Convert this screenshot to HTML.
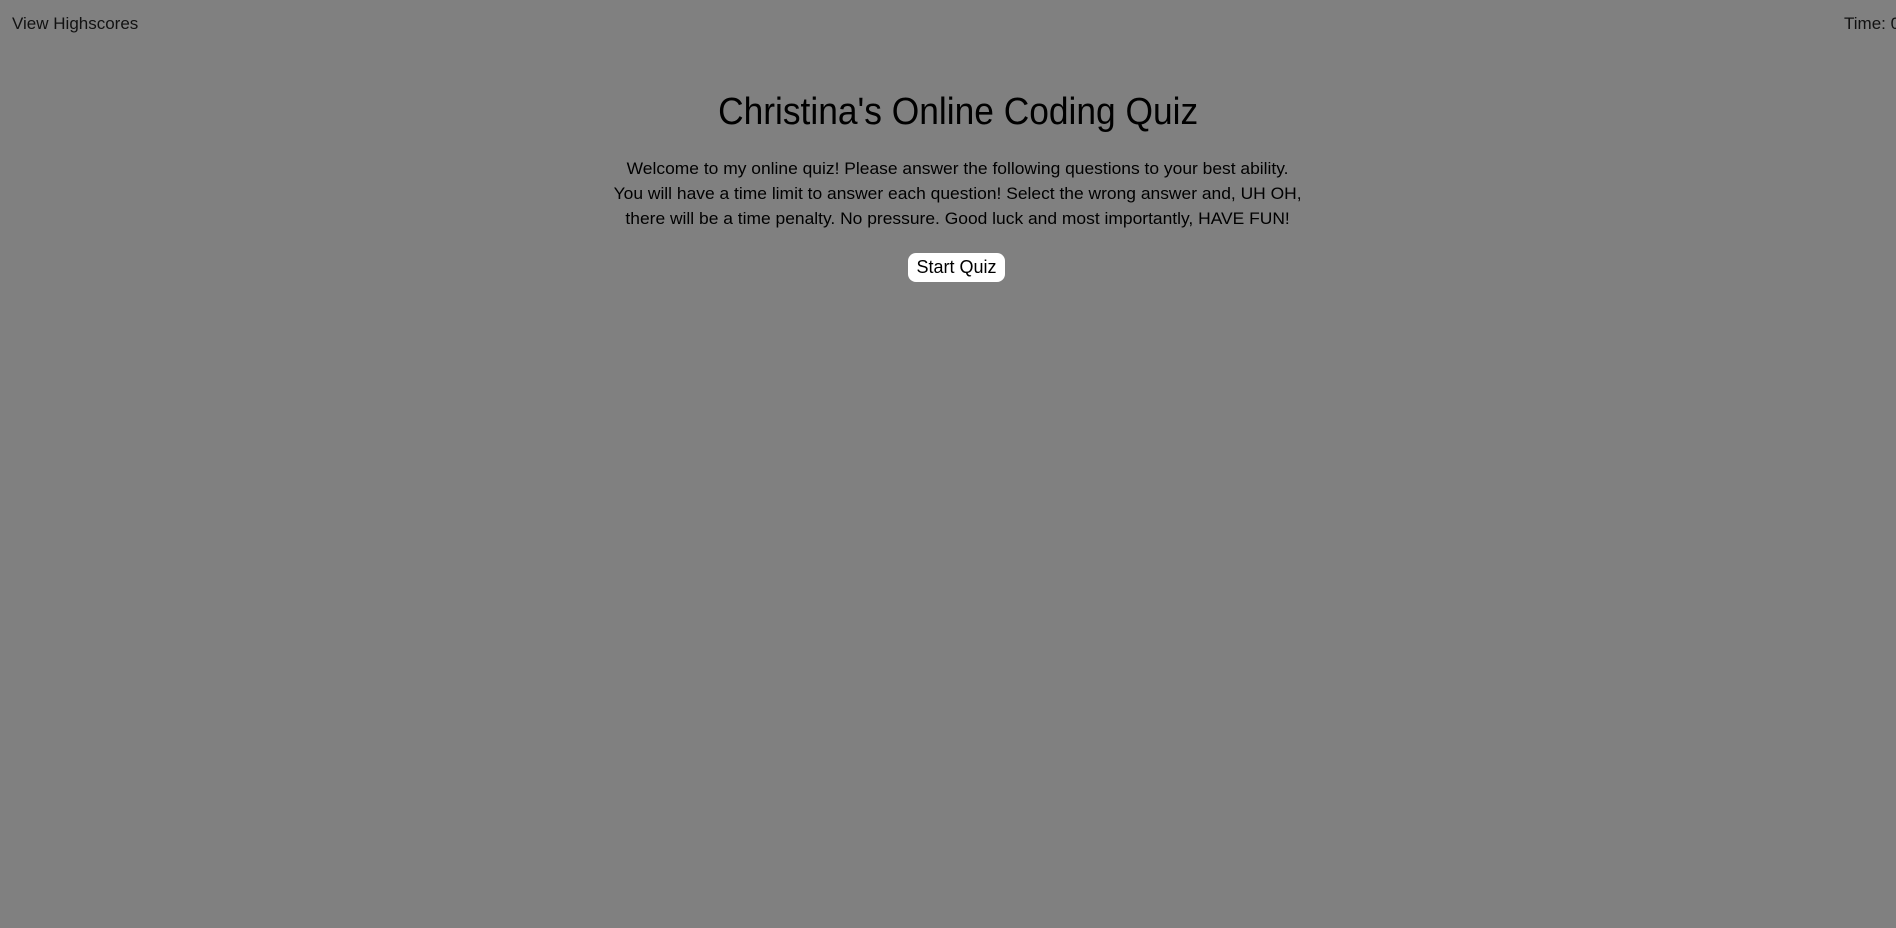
<!DOCTYPE html>
<html><head><meta charset="utf-8"><style>
html,body{margin:0;padding:0;width:1896px;height:928px;background:#808080;overflow:hidden;font-family:"Liberation Sans",sans-serif;color:#000;}
.tl{position:absolute;left:12px;top:14px;font-size:17px;color:#111;}
.tr{position:absolute;left:1844px;top:14px;font-size:17px;white-space:nowrap;color:#111;}
h1{position:absolute;left:10px;width:1896px;top:90px;margin:0;text-align:center;font-size:38px;font-weight:normal;line-height:44px;}
h1 span{display:inline-block;transform:scaleX(0.93);}
.p{position:absolute;left:10px;width:1896px;top:156px;text-align:center;font-size:17px;line-height:25px;}
.p div{display:inline-block;transform:scaleX(1.025);white-space:nowrap;}
.btn{position:absolute;left:908px;top:253px;width:97px;height:29px;background:#fff;border-radius:8px;text-align:center;font-size:18px;line-height:29px;white-space:nowrap;}
</style></head><body>
<div class="tl">View Highscores</div>
<div class="tr">Time: 0</div>
<h1><span>Christina's Online Coding Quiz</span></h1>
<div class="p"><div>Welcome to my online quiz! Please answer the following questions to your best ability.<br>You will have a time limit to answer each question! Select the wrong answer and, UH OH,<br>there will be a time penalty. No pressure. Good luck and most importantly, HAVE FUN!</div></div>
<div class="btn">Start Quiz</div>
</body></html>
